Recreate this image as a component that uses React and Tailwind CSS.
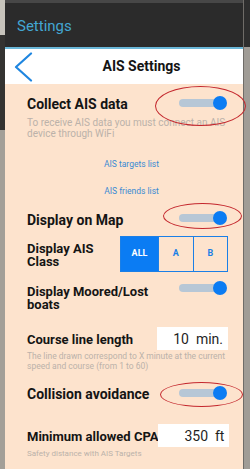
import React from 'react';

// Android style switch, always "on" in this screen
const Toggle = ({ className = '' }) => (
  <div className={`relative w-[48px] h-[14px] shrink-0 ${className}`}>
    <div className="absolute left-0 right-[6px] top-[3px] h-[8px] rounded-full bg-[#b7c7d6]" />
    <div className="absolute right-0 top-0 w-[14px] h-[14px] rounded-full bg-[#0b7cf3]" />
  </div>
);

const ValueBox = ({ value, unit }) => (
  <div className="w-[71px] h-[23px] bg-white flex items-center justify-end gap-[7px] pr-[5px] text-[14px] text-[#1f1f1f] leading-none shrink-0">
    <span>{value}</span>
    <span>{unit}</span>
  </div>
);

// red hand-drawn ellipses that mark the switches
const Mark = ({ style }) => (
  <div className="absolute rounded-[50%] border border-[#c4282e] pointer-events-none" style={style} />
);

export default function App() {
  return (
    <div className="relative w-[250px] h-[469px] overflow-hidden flex font-['Roboto',sans-serif] bg-[#a29e97]">
      {/* map peeking on the left */}
      <div className="w-[5px] flex flex-col shrink-0">
        <div className="h-[35px] bg-[#c6c3bb]" />
        <div className="h-[95px] bg-[#343331]" />
        <div className="flex-1 bg-[#a39f98]" />
      </div>

      {/* dialog */}
      <div className="w-[238px] flex flex-col shrink-0 bg-[#fde3cd]">
        <div className="h-[47px] bg-[#2b2b2b] border-t-[3px] border-[#474747] flex items-center pl-[12px] pt-[2px]">
          <span className="text-[15px] text-[#43a6d2]">Settings</span>
        </div>
        <div className="h-[2px] bg-[#6ab7d8]" />
        <div className="h-[35px] bg-white flex items-center">
          <div className="w-[35px] h-full flex items-center pl-[9px]">
            <svg width="19" height="30" viewBox="0 0 19 30" fill="none">
              <path d="M17 1.5 L2 15 L17 28.5" stroke="#1f86e0" strokeWidth="2.2" strokeLinecap="round" strokeLinejoin="round" />
            </svg>
          </div>
          <div className="flex-1 text-center text-[14px] font-bold text-[#141414]">AIS Settings</div>
        </div>

        <div className="flex flex-col pl-[22px] pr-[16px]">
          <div className="mt-[12px] h-[16px] flex items-center justify-between">
            <span className="text-[14px] font-bold text-[#141414] leading-[16px]">Collect AIS data</span>
            <Toggle className="-mt-[2px]" />
          </div>
          <p className="mt-[5px] text-[10px] leading-[11px] text-[#bbb2aa]">
            To receive AIS data you must connect an AIS device through WiFi
          </p>

          <div className="mt-[20px] h-[10px] pl-[9px] text-center text-[8.5px] leading-[10px] text-[#3a8ad3]">AIS targets list</div>
          <div className="mt-[17px] h-[10px] pl-[9px] text-center text-[8.5px] leading-[10px] text-[#3a8ad3]">AIS friends list</div>

          <div className="mt-[16px] h-[16px] flex items-center justify-between">
            <span className="text-[14px] font-bold text-[#141414] leading-[16px]">Display on Map</span>
            <Toggle className="-mt-[5px]" />
          </div>

          <div className="mt-[8px] flex items-center justify-between">
            <span className="text-[13px] font-bold text-[#141414] leading-[13px] w-[85px] pt-[2px]">Display AIS Class</span>
            <div className="flex h-[36px] w-[108px] border border-[#1b7fe6] mr-[-1px]">
              <div className="w-[37px] bg-[#0b7cf3] flex items-center justify-center text-[9px] font-bold text-white">ALL</div>
              <div className="flex-1 border-l border-[#1b7fe6] flex items-center justify-center text-[9px] font-bold text-[#1b7fe6]">A</div>
              <div className="flex-1 border-l border-[#1b7fe6] flex items-center justify-center text-[9px] font-bold text-[#1b7fe6]">B</div>
            </div>
          </div>

          <div className="mt-[13px] flex items-start justify-between">
            <span className="text-[13px] font-bold text-[#141414] leading-[13px] w-[140px]">Display Moored/Lost boats</span>
            <Toggle className="-mt-[4px]" />
          </div>

          <div className="mt-[16px] flex items-start justify-between mr-[-1px]">
            <span className="text-[13px] font-bold text-[#141414] leading-[16px] mt-[5px] whitespace-nowrap">Course line length</span>
            <ValueBox value="10" unit="min." />
          </div>
          <p className="mt-[1px] text-[8.5px] leading-[10px] text-[#bbb2aa]">
            The line drawn correspond to X minute at the current speed and course (from 1 to 60)
          </p>

          <div className="mt-[15px] h-[16px] flex items-center justify-between">
            <span className="text-[14px] font-bold text-[#141414] leading-[16px]">Collision avoidance</span>
            <Toggle className="-mt-[3px]" />
          </div>

          <div className="mt-[22px] flex items-start justify-between mr-[-1px]">
            <span className="text-[13px] font-bold text-[#141414] leading-[16px] mt-[5px] whitespace-nowrap">Minimum allowed CPA</span>
            <ValueBox value="350" unit="ft" />
          </div>
          <p className="mt-[2px] text-[8px] leading-[10px] text-[#bbb2aa]">Safety distance with AIS Targets</p>
        </div>
      </div>

      {/* map peeking on the right */}
      <div className="flex-1 flex flex-col border-l border-[#6f6c68]">
        <div className="h-[47px] bg-[#2e2e2e]" />
        <div className="flex-1 bg-[#a09c96]" />
      </div>

      <Mark style={{ left: 155, top: 86, width: 91, height: 40 }} />
      <Mark style={{ left: 163, top: 203, width: 79, height: 26 }} />
      <Mark style={{ left: 160, top: 382, width: 83, height: 25 }} />
    </div>
  );
}
